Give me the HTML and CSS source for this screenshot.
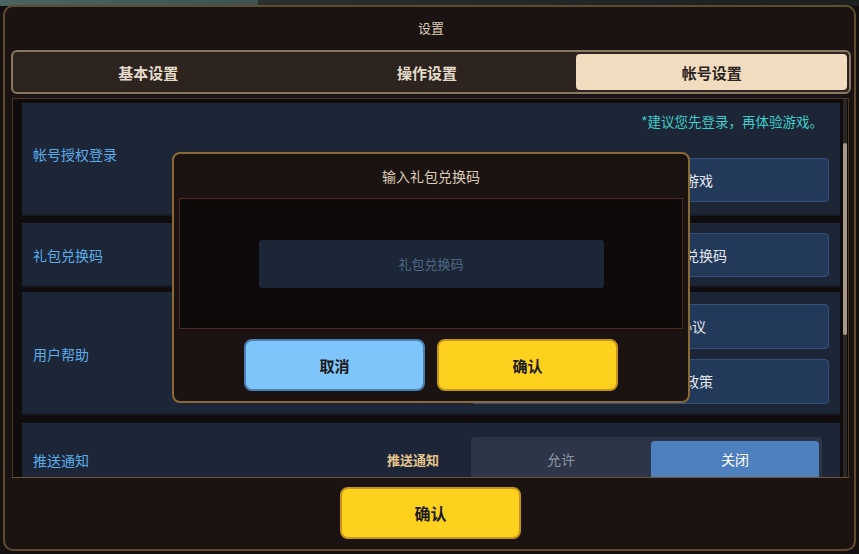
FILE: index.html
```html
<!DOCTYPE html>
<html lang="zh-CN">
<head>
    <meta charset="UTF-8">
    <meta name="viewport" content="width=device-width, initial-scale=1.0">
    <title>设置</title>
    <link rel="stylesheet" href="styles.css">
</head>
<body>

    <div class="screen">
        <div class="window">
            <div class="title">设置</div>

            <div class="tabs">
                <div class="tab first">基本设置</div>
                <div class="tab">操作设置</div>
                <div class="tab active">帐号设置</div>
            </div>

            <div class="panel">
                <div class="list">
                    <div class="row row-login">
                        <div class="label">帐号授权登录</div>
                        <div class="side">
                            <p class="hint">*建议您先登录，再体验游戏。</p>
                            <div class="btn-wide">登录账号，开始游戏</div>
                        </div>
                    </div>

                    <div class="row row-code">
                        <div class="label">礼包兑换码</div>
                        <div class="side">
                            <div class="btn-wide">点击此处输入礼包兑换码</div>
                        </div>
                    </div>

                    <div class="row row-help">
                        <div class="label">用户帮助</div>
                        <div class="side">
                            <div class="btn-wide">查看用户服务协议</div>
                            <div class="btn-wide">用户协议与隐私政策</div>
                        </div>
                    </div>

                    <div class="row row-push">
                        <div class="label">推送通知</div>
                        <span class="sub-label">推送通知</span>
                        <div class="toggle">
                            <span class="opt">允许</span>
                            <span class="opt on">关闭</span>
                        </div>
                    </div>
                </div>

                <div class="scrollbar"><div class="thumb"></div></div>
            </div>

            <div class="footer">
                <button class="btn btn-yellow">确认</button>
            </div>
        </div>

        <!-- 兑换码弹窗 -->
        <div class="modal">
            <div class="modal-title">输入礼包兑换码</div>
            <div class="modal-box">
                <input type="text" class="code-input" placeholder="礼包兑换码">
            </div>
            <div class="modal-btns">
                <button class="btn btn-blue">取消</button>
                <button class="btn btn-yellow">确认</button>
            </div>
        </div>
    </div>

</body>
</html>
```

FILE: styles.css
```css
*{
    margin: 0;
    padding: 0;
    box-sizing: border-box;
}

body{
    width: 859px;
    height: 554px;
    overflow: hidden;
    font-family: "Noto Sans CJK SC", "Noto Sans", sans-serif;
    background: linear-gradient(to right, #4a6462 0, #3d524f 30%, #2a2f30 30%, #1c1e20 100%);
}

.screen{
    position: relative;
    width: 859px;
    height: 554px;
    padding: 5px 3px 3px 3px;
    background: linear-gradient(to bottom, transparent 0 6px, #141010 6px);
}

.window{
    width: 853px;
    height: 546px;
    border: 2px solid #5f4c2f;
    border-radius: 10px;
    background-color: #1b1312;
    padding: 0 3px 0 6px;
}

.title{
    height: 43px;
    display: flex;
    align-items: center;
    justify-content: center;
    padding-bottom: 3px;
    color: #d9cbb4;
    font-size: 13px;
}

/* tabs */

.tabs{
    height: 44px;
    display: flex;
    border: 2px solid #8a7862;
    border-radius: 6px;
    background-color: #2d241f;
}

.tab{
    flex: 1;
    display: flex;
    align-items: center;
    justify-content: center;
    color: #e6dccb;
    font-size: 15px;
    font-weight: bold;
    border-radius: 4px;
}

.tab.first{
    padding-right: 8px;
}

.tab.active{
    margin: 2px 2px 2px 14px;
    background-color: #f2dcc0;
    color: #2b2420;
}

/* panel */

.panel{
    position: relative;
    height: 380px;
    margin-top: 4px;
    margin-left: 1px;
    margin-right: 2px;
    border: 1px solid #4a3823;
    border-bottom-color: #6a5434;
    background-color: #100c0d;
    overflow: hidden;
    padding: 4px 8px 0 9px;
}

.list{
    display: flex;
    flex-direction: column;
    gap: 6px;
}

.row{
    display: flex;
    align-items: center;
    background-color: #1c2636;
    padding: 0 11px 0 11px;
    box-shadow: inset 0 -2px 0 rgba(0, 0, 0, 0.25);
}

.label{
    flex: 1;
    color: #5badea;
    font-size: 14px;
}

.side{
    width: 358px;
    display: flex;
    flex-direction: column;
    align-items: stretch;
}

.btn-wide{
    height: 44px;
    display: flex;
    align-items: center;
    justify-content: center;
    background-color: #23395a;
    border: 1px solid #34507a;
    border-radius: 4px;
    color: #e2e8ef;
    font-size: 14px;
}

.row-login{
    height: 113px;
    padding-top: 9px;
    padding-bottom: 14px;
}

.row-login .label{
    margin-top: -6px;
}

.hint{
    align-self: flex-end;
    margin-right: 6px;
    color: #3fcccb;
    font-size: 13.5px;
    line-height: 18px;
    margin-bottom: 28px;
}

.row-code{
    height: 64px;
    margin-top: 1px;
}

.row-help{
    height: 123px;
    margin-top: -1px;
}

.row-help .side{
    gap: 10px;
}

.row-help .btn-wide{
    height: 45px;
}

.row-push{
    height: 64px;
    margin-top: 2px;
    align-items: flex-start;
    padding-top: 14px;
    padding-right: 18px;
}

.row-push .label{
    flex: none;
    width: 354px;
    margin-top: 13px;
}

.sub-label{
    width: 84px;
    margin-top: 13px;
    color: #e6c48e;
    font-size: 13px;
    font-weight: bold;
}

.toggle{
    flex: 1;
    height: 60px;
    display: flex;
    padding: 4px 3px 0 0;
    background-color: #2c3648;
    border-radius: 4px 4px 0 0;
}

.opt{
    flex: 1;
    display: flex;
    justify-content: center;
    padding-top: 8px;
    color: #8c96a2;
    font-size: 14px;
}

.opt.on{
    flex: 0 0 168px;
    background-color: #4e7fbe;
    border-radius: 4px 4px 0 0;
    color: #ffffff;
}

.scrollbar{
    position: absolute;
    top: 0;
    right: 1px;
    width: 4px;
    height: 100%;
    background-color: #2a2523;
}

.thumb{
    margin-top: 44px;
    height: 192px;
    background-color: #a89a88;
    border-radius: 2px;
}

/* footer */

.footer{
    height: 71px;
    display: flex;
    justify-content: center;
    padding-top: 9px;
    padding-right: 1px;
}

.btn{
    width: 181px;
    height: 52px;
    border-radius: 8px;
    font-family: inherit;
    font-size: 15px;
    font-weight: bold;
    color: #1c1a18;
    cursor: pointer;
}

.btn-yellow{
    background-color: #fdd11e;
    border: 2px solid #c6951a;
}

.btn-blue{
    background-color: #7ec5fc;
    border: 2px solid #4b7fb0;
}

.footer .btn{
    font-size: 16px;
}

/* modal */

.modal{
    position: absolute;
    left: 172px;
    top: 152px;
    width: 518px;
    height: 251px;
    border: 2px solid #8a6a34;
    border-radius: 8px;
    background-color: #1b1312;
    padding: 0 5px;
}

.modal-title{
    height: 44px;
    display: flex;
    align-items: center;
    justify-content: center;
    color: #dccdb5;
    font-size: 14px;
}

.modal-box{
    height: 131px;
    display: flex;
    align-items: center;
    justify-content: center;
    background-color: #0f0a0a;
    border: 1px solid #4b2a22;
}

.code-input{
    width: 345px;
    height: 48px;
    border: none;
    outline: none;
    border-radius: 3px;
    background-color: #1b2736;
    text-align: center;
    font-family: inherit;
    font-size: 13px;
    color: #ffffff;
}

.code-input::placeholder{
    color: #4e6785;
}

.modal-btns{
    display: flex;
    justify-content: center;
    gap: 12px;
    margin-top: 10px;
}
```
